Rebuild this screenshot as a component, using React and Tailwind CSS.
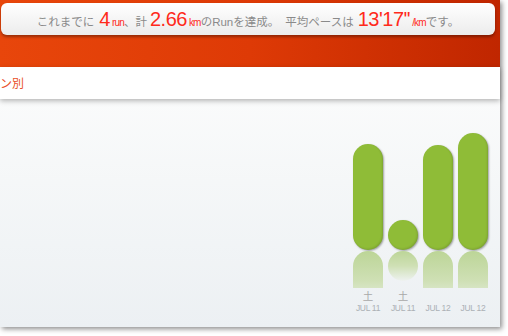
const bars = [
  { h: 106, day: '土', date: 'JUL 11' },
  { h: 30, day: '土', date: 'JUL 11' },
  { h: 105, day: '', date: 'JUL 12' },
  { h: 117, day: '', date: 'JUL 12' },
];

const Stat = ({ children }) => (
  <span className="text-[#ff2a1c] text-[20px] leading-none tracking-[-0.5px]">{children}</span>
);
const Unit = ({ children }) => (
  <span className="text-[#ff2a1c] text-[10px] leading-none tracking-[-0.8px] ml-[2px]">{children}</span>
);

export default function App() {
  return (
    <div className="w-[508px] h-[336px] bg-white overflow-hidden font-['Liberation_Sans','Noto_Sans_CJK_JP',sans-serif]">
      <div className="w-[500px] h-[327px] flex flex-col shadow-[2px_2px_5px_rgba(0,0,0,0.45)]">
        {/* header */}
        <div className="h-[67px] bg-gradient-to-r from-[#e8460b] via-[#de3a06] to-[#c02600] pt-[3px]">
          <div className="ml-[1px] w-[494px] h-[32px] rounded-[6px] bg-gradient-to-b from-white to-[#ececec] shadow-[0_2px_3px_rgba(0,0,0,0.35)] flex items-center justify-center pt-[2px] text-[11.5px] text-[#8a8a8a]">
            <span className="flex items-baseline whitespace-nowrap">
              これまでに<span className="ml-[5px]" /><Stat>4</Stat><Unit>run</Unit>、計
              <span className="ml-[3px]" /><Stat>2.66</Stat><Unit>km</Unit>のRunを達成。
              <span className="ml-[6px]" />平均ペースは<span className="ml-[4px]" />
              <Stat>13'17''</Stat><Unit>/km</Unit>です。
            </span>
          </div>
        </div>

        {/* tab band */}
        <div className="relative z-10 h-[32px] bg-white shadow-[0_2px_5px_rgba(0,0,0,0.28)] pt-[11px] text-[12px] leading-none text-[#e9502a]">
          ン別
        </div>

        {/* chart area */}
        <div className="flex-1 bg-gradient-to-b from-[#fafbfb] to-[#ecf0f3] flex justify-end pr-[12px]">
          <div className="flex gap-[5px] mt-[20px]">
            {bars.map((b, i) => (
              <div key={i} className="w-[30px] flex flex-col items-center">
                <div className="h-[131px] w-full flex items-end">
                  <div
                    className="w-full rounded-full bg-[#8fbc37] shadow-[1px_1px_2px_rgba(0,0,0,0.35),inset_-1px_-1px_2px_rgba(0,0,0,0.12)]"
                    style={{ height: b.h }}
                  />
                </div>
                <div className="mt-[1px] w-full h-[37px] overflow-hidden">
                  <div
                    className="w-full rounded-full bg-gradient-to-b from-[#bcd597] via-[#cfe0b5] to-[#eef2f0]"
                    style={{ height: b.h < 37 ? b.h : 60 }}
                  />
                </div>
                <div className="h-[13px] pt-[3px] text-[10.5px] leading-none text-[#a9a9a9]">{b.day}</div>
                <div className="mt-[3px] text-[8.5px] leading-none text-[#abb0b5] whitespace-nowrap tracking-[-0.3px]">{b.date}</div>
              </div>
            ))}
          </div>
        </div>
      </div>
    </div>
  );
}
